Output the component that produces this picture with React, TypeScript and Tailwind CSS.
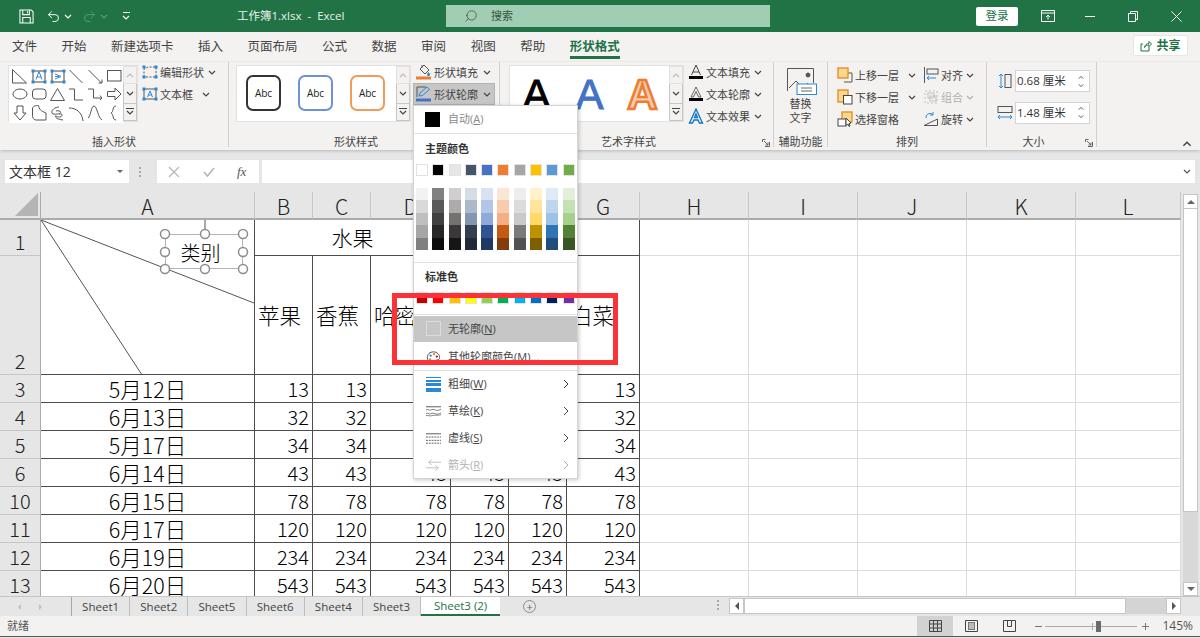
import { Search, Undo2, Redo2 } from "lucide-react";

const tabs = ["文件", "开始", "新建选项卡", "插入", "页面布局", "公式", "数据", "审阅", "视图", "帮助"];

const themeColors = [
  "bg-[#ffffff]", "bg-[#000000]", "bg-[#e7e6e6]", "bg-[#44546a]", "bg-[#4472c4]",
  "bg-[#ed7d31]", "bg-[#a5a5a5]", "bg-[#ffc000]", "bg-[#5b9bd5]", "bg-[#70ad47]",
];

const shadeColors = [
  ["bg-[#f2f2f2]", "bg-[#d9d9d9]", "bg-[#bfbfbf]", "bg-[#a6a6a6]", "bg-[#808080]"],
  ["bg-[#808080]", "bg-[#595959]", "bg-[#404040]", "bg-[#262626]", "bg-[#0d0d0d]"],
  ["bg-[#d0cece]", "bg-[#aeaaaa]", "bg-[#767171]", "bg-[#3a3838]", "bg-[#171616]"],
  ["bg-[#d6dce4]", "bg-[#adb9ca]", "bg-[#8497b0]", "bg-[#333f4f]", "bg-[#222a35]"],
  ["bg-[#d9e2f3]", "bg-[#b4c6e7]", "bg-[#8eaadb]", "bg-[#2f5496]", "bg-[#1f3864]"],
  ["bg-[#fbe5d5]", "bg-[#f7cbac]", "bg-[#f4b083]", "bg-[#c55a11]", "bg-[#833c0b]"],
  ["bg-[#ededed]", "bg-[#dbdbdb]", "bg-[#c9c9c9]", "bg-[#7b7b7b]", "bg-[#525252]"],
  ["bg-[#fff2cc]", "bg-[#fee599]", "bg-[#ffd965]", "bg-[#bf9000]", "bg-[#7f6000]"],
  ["bg-[#deeaf6]", "bg-[#bdd6ee]", "bg-[#9cc3e5]", "bg-[#2e75b5]", "bg-[#1e4e79]"],
  ["bg-[#e2efd9]", "bg-[#c5e0b3]", "bg-[#a8d08d]", "bg-[#538135]", "bg-[#375623]"],
];

const standardColors = [
  "bg-[#c00000]", "bg-[#ff0000]", "bg-[#ffc000]", "bg-[#ffff00]", "bg-[#92d050]",
  "bg-[#00b050]", "bg-[#00b0f0]", "bg-[#0070c0]", "bg-[#002060]", "bg-[#7030a0]",
];

const dataRows = [
  { row: "3", date: "5月12日", value: 13 },
  { row: "4", date: "6月13日", value: 32 },
  { row: "5", date: "5月17日", value: 34 },
  { row: "6", date: "6月14日", value: 43 },
  { row: "10", date: "6月15日", value: 78 },
  { row: "11", date: "6月17日", value: 120 },
  { row: "12", date: "6月19日", value: 234 },
  { row: "13", date: "6月20日", value: 543 },
];

const sheets = ["Sheet1", "Sheet2", "Sheet5", "Sheet6", "Sheet4", "Sheet3"];

const Chev = ({ up, className = "" }: { up?: boolean; className?: string }) => (
  <svg viewBox="0 0 8 5" className={`h-[5px] w-2 ${className}`} fill="none" stroke="currentColor" strokeWidth="1.2">
    <path d={up ? "M1 4l3-3 3 3" : "M1 1l3 3 3-3"} />
  </svg>
);

const Icon = ({ children, w = 16 }: { children: React.ReactNode; w?: number }) => (
  <svg viewBox={`0 0 ${w} 16`} width={w} height="16" fill="none" stroke="#555" strokeWidth="1" className="shrink-0">
    {children}
  </svg>
);

const Handles = () => (
  <>
    <rect x="0.500" y="1.500" width="3" height="3" fill="#2b88d8" stroke="none" />
    <rect x="12.500" y="1.500" width="3" height="3" fill="#2b88d8" stroke="none" />
    <rect x="0.500" y="11.500" width="3" height="3" fill="#2b88d8" stroke="none" />
    <rect x="12.500" y="11.500" width="3" height="3" fill="#2b88d8" stroke="none" />
  </>
);

const RibbonItem = ({
  icon,
  label,
  gap = 4,
  disabled,
}: {
  icon: React.ReactNode;
  label: string;
  gap?: number;
  disabled?: boolean;
}) => (
  <div className={`flex h-[22px] items-center ${disabled ? "text-[#b1b1b1]" : "text-[#444]"}`}>
    {icon}
    <span className="ml-[2px] whitespace-nowrap text-[11px] leading-none">{label}</span>
    <span style={{ marginLeft: gap }}>
      <Chev />
    </span>
  </div>
);

const GalleryScroll = () => (
  <div className="flex w-[14px] flex-col text-[#444]">
    <div className="flex h-[19px] items-center justify-center border border-[#e1e1e1] text-[#bdbdbd]">
      <Chev up />
    </div>
    <div className="flex h-[19px] items-center justify-center border-x border-[#c6c6c6]">
      <Chev />
    </div>
    <div className="flex h-[19px] flex-col items-center justify-center gap-[1px] border border-[#c6c6c6]">
      <div className="h-px w-2 bg-[#444]" />
      <Chev />
    </div>
  </div>
);

const Group = ({
  width,
  label,
  labelClass = "",
  launcher,
  children,
}: {
  width: string;
  label: string;
  labelClass?: string;
  launcher?: boolean;
  children: React.ReactNode;
}) => (
  <div className={`relative flex h-[85px] shrink-0 flex-col border-r border-[#d2d0ce] ${width}`}>
    <div className="flex flex-1">{children}</div>
    <div className={`h-[10px] whitespace-nowrap text-center text-[11px] leading-[10px] text-[#444] ${labelClass}`}>{label}</div>
    {launcher && (
      <svg viewBox="0 0 8 8" className="absolute bottom-0 right-[3px] h-2 w-2" fill="none" stroke="#666" strokeWidth="1">
        <path d="M7.5 3v4.5H3M.5 3V.5h3M2 2l4 4M6 3.5V6H3.5" />
      </svg>
    )}
  </div>
);

const ShapeGallery = () => (
  <svg viewBox="0 0 114 57" className="h-[57px] w-[114px] bg-white" fill="none" stroke="#555" strokeWidth="1">
    <path d="M3.5 3.5V17h14z" />
    <rect x="24" y="5" width="12" height="11" stroke="#444" />
    <path d="M27 13.500l3-8 3 8M28 11h4" stroke="#2b88d8" />
    <path d="M22.500 3.500h3v3h-3zM34.500 3.500h3v3h-3zM22.500 14.500h3v3h-3zM34.500 14.500h3v3h-3z" fill="#2b88d8" stroke="none" />
    <rect x="43" y="5" width="12" height="11" stroke="#444" />
    <path d="M46 8l6 2.500-6 2.500M46 10.500h4" stroke="#2b88d8" />
    <path d="M41.500 3.500h3v3h-3zM53.500 3.500h3v3h-3zM41.500 14.500h3v3h-3zM53.500 14.500h3v3h-3z" fill="#2b88d8" stroke="none" />
    <path d="M60.5 4l13 13M79.5 4l13 13" />
    <path d="M93 13.5V17h-3.5" />
    <rect x="98.5" y="4.5" width="13.5" height="10.5" />
    <ellipse cx="11" cy="28" rx="7" ry="5" />
    <rect x="23.5" y="23" width="13.5" height="10" rx="3" />
    <path d="M41.5 34.5l7-12 7 12z" />
    <path d="M60 23h5.5v11H74M79 23h5.5v9H92" />
    <path d="M91 29.5l2 2.5-2 2" />
    <path d="M98.5 25.5h7.5V22l6 6-6 6v-3.5h-7.5z" />
    <path d="M8 40v7H5l6 7 6-7h-3v-7z" />
    <path d="M23.5 43c0-3 3-3.5 6-3.5 1 6 5 6 7.5 7.5v7h-10c-3 0-3.5-3-3.5-5z" />
    <path d="M50 41c-4 0-8 3-7 6s10-1 10 2-5 2-6 1-2 3 7 4M47 45c3-1 7 1 3 3" />
    <path d="M60 42c7 0 13 4 14 13M79 52c3-2 3-12 6-12s4 12 8 14" />
    <path d="M107 40c-4 0-2 6-5 7 3 1 1 7 5 7" />
  </svg>
);

const Swatch = ({ color }: { color: string }) => <div className={`h-3 w-3 border border-[#e2e2e2] ${color}`} />;

const MenuRow = ({
  icon,
  label,
  hotkey,
  suffix = "",
  disabled,
  arrow,
  active,
  className = "h-[27px]",
}: {
  icon: React.ReactNode;
  label: string;
  hotkey: string;
  suffix?: string;
  disabled?: boolean;
  arrow?: boolean;
  active?: boolean;
  className?: string;
}) => (
  <div
    className={`flex shrink-0 items-center pl-[11px] pr-2 text-[11px] ${className} ${active ? "bg-[#c6c6c6]" : ""} ${
      disabled ? "text-[#b1b1b1]" : "text-[#444]"
    }`}
  >
    <div className="flex w-[16px] shrink-0 justify-center">{icon}</div>
    <span className="ml-[7px] whitespace-nowrap">
      {label}(<span className="underline">{hotkey}</span>){suffix}
    </span>
    {arrow && (
      <svg viewBox="0 0 6 10" className="ml-auto h-[10px] w-[6px]" fill="none" stroke="currentColor">
        <path d="M1 1l4 4-4 4" />
      </svg>
    )}
  </div>
);

const OutlineMenu = () => (
  <div className="absolute left-[413px] top-[105px] z-20 flex h-[374px] w-[165px] flex-col border border-[#d4d4d4] bg-white shadow-[1px_1px_4px_rgba(0,0,0,0.22)]">
    <div className="flex h-[28px] shrink-0 items-center border-b border-[#e1e1e1] pl-[11px]">
      <div className="h-[15px] w-[15px] bg-black" />
      <span className="ml-2 text-[11px] text-[#8a8a8a]">
        自动(<span className="underline">A</span>)
      </span>
    </div>
    <div className="flex h-[30px] shrink-0 items-center pl-[11px] text-[11px] font-bold text-[#333]">主题颜色</div>
    <div className="flex gap-[4.3px] pl-[2px]">
      {themeColors.map((c) => (
        <Swatch key={c} color={c} />
      ))}
    </div>
    <div className="mt-3 flex gap-[4.3px] pl-[2px]">
      {shadeColors.map((col, i) => (
        <div key={i} className="flex flex-col">
          {col.map((c) => (
            <div key={c} className={`h-[12.4px] w-3 ${c}`} />
          ))}
        </div>
      ))}
    </div>
    <div className="mt-3 h-px shrink-0 bg-[#e1e1e1]" />
    <div className="flex h-[29px] shrink-0 items-center pl-[11px] text-[11px] font-bold text-[#333]">标准色</div>
    <div className="flex gap-[4.3px] pl-[2px]">
      {standardColors.map((c) => (
        <Swatch key={c} color={c} />
      ))}
    </div>
    <div className="mt-[10px] h-px shrink-0 bg-[#e1e1e1]" />
    <MenuRow
      active
      className="mt-px h-[26px]"
      label="无轮廓"
      hotkey="N"
      icon={<div className="h-[15px] w-[15px] border border-[#dcdcdc]" />}
    />
    <MenuRow
      className="mt-[3px] h-[25px]"
      label="其他轮廓颜色"
      hotkey="M"
      suffix="..."
      icon={
        <svg viewBox="0 0 16 16" className="h-[15px] w-[15px]" fill="none" stroke="#444">
          <path d="M8 2C4 2 1.500 4.500 1.500 8c0 3.500 3 6 6 6 2 0 1.500-2 2.500-3 1-.8 4.500.5 4.500-3 0-3.500-3-6-6.500-6z" />
          <circle cx="5" cy="6" r="1.200" fill="#2b88d8" stroke="none" />
          <circle cx="8.500" cy="4.500" r="1.200" fill="#ed7d31" stroke="none" />
          <circle cx="4.500" cy="10" r="1.200" fill="#70ad47" stroke="none" />
          <circle cx="11.500" cy="7" r="1.200" fill="#c00000" stroke="none" />
        </svg>
      }
    />
    <div className="h-px shrink-0 bg-[#e1e1e1]" />
    <MenuRow
      arrow
      label="粗细"
      hotkey="W"
      icon={
        <div className="flex h-[15px] w-[15px] flex-col justify-between">
          <div className="h-px bg-[#2b88d8]" />
          <div className="h-[2px] bg-[#2b88d8]" />
          <div className="h-[3px] bg-[#2b88d8]" />
          <div className="h-[4px] bg-[#2b88d8]" />
        </div>
      }
    />
    <MenuRow
      arrow
      label="草绘"
      hotkey="K"
      icon={
        <svg viewBox="0 0 16 12" className="h-3 w-[15px]" fill="none" stroke="#555">
          <path d="M0 1.500h16" />
          <path d="M0 5c2-2 3 1 5 0s3-1 5 0 4 0 6-1M0 9c2-2 3 1 5 0s3-1 5 0 4 0 6-1M0 11c2-1 4 1 6 0s6 0 10-1" strokeWidth=".8" />
        </svg>
      }
    />
    <MenuRow
      arrow
      label="虚线"
      hotkey="S"
      icon={
        <svg viewBox="0 0 16 12" className="h-3 w-[15px]" fill="none" stroke="#555">
          <path d="M0 1.500h16" />
          <path d="M0 5h16M0 8.500h16M0 11.500h16" strokeDasharray="2 1" />
        </svg>
      }
    />
    <MenuRow
      arrow
      disabled
      label="箭头"
      hotkey="R"
      icon={
        <svg viewBox="0 0 16 14" className="h-[14px] w-[15px]" fill="none" stroke="#bdbdbd">
          <path d="M3 4h13M3 4l3-3M3 4l3 3M0 10h13M13 10l-3-3M13 10l-3 3" />
        </svg>
      }
    />
  </div>
);

const gridLine = "border-r border-b border-[#4d4d4d]";
const lightCell = "border-r border-b border-[#dcdcdc]";
const headCell = "flex items-center justify-center border-r border-b-2 border-r-[#c6c6c6] border-b-[#ababab] bg-[#e6e6e6] pt-[2px] text-[21px] text-[#222]";
const rowHead = "flex justify-center border-r border-b border-r-[#ababab] border-b-[#c6c6c6] bg-[#e6e6e6] text-[#222]";

const LightCells = () => (
  <>
    {[0, 1, 2, 3, 4].map((i) => (
      <div key={i} className={lightCell} />
    ))}
  </>
);

const Sheet = () => (
  <div className="relative grid w-[1181px] shrink-0 grid-cols-[41px_214px_58px_58px_80px_58px_58px_73px_109px_109px_109px_109px_105px] grid-rows-[28px_36px_119px] auto-rows-[28px] overflow-hidden bg-white font-['Noto_Sans_CJK_SC',sans-serif] text-[20px] font-light leading-none text-black">
    <div className="relative border-r border-b-2 border-r-[#ababab] border-b-[#ababab] bg-[#e6e6e6]">
      <div className="absolute bottom-[2px] right-[2px] h-0 w-0 border-b-[23px] border-l-[23px] border-b-[#b4b4b4] border-l-transparent" />
    </div>
    {["A", "B", "C", "D", "E", "F", "G", "H", "I", "J", "K", "L"].map((c) => (
      <div key={c} className={headCell}>
        {c}
      </div>
    ))}

    <div className={`${rowHead} items-end pb-[3px]`}>1</div>
    <div className={`row-span-2 ${gridLine}`} />
    <div className={`col-span-3 flex items-center justify-center text-[21px] ${gridLine}`}>水果</div>
    <div className={`col-span-3 ${gridLine}`} />
    <LightCells />

    <div className={`${rowHead} items-end pb-[3px]`}>2</div>
    <div className={`flex items-center whitespace-nowrap pl-[3px] text-[21.500px] ${gridLine}`}>苹果</div>
    <div className={`flex items-center whitespace-nowrap pl-[3px] text-[21.500px] ${gridLine}`}>香蕉</div>
    <div className={`flex items-center whitespace-nowrap pl-[3px] text-[21.500px] ${gridLine}`}>哈密瓜</div>
    <div className={gridLine} />
    <div className={gridLine} />
    <div className={`flex items-center whitespace-nowrap pl-[4px] text-[21.500px] ${gridLine}`}>白菜</div>
    <LightCells />

    {dataRows.map((r) => (
      <div key={r.row} className="contents">
        <div className={`${rowHead} items-center`}>{r.row}</div>
        <div className={`flex items-center justify-center text-[21.500px] ${gridLine}`}>{r.date}</div>
        {[0, 1, 2, 3, 4, 5].map((i) => (
          <div key={i} className={`flex items-center justify-end pr-[3px] ${gridLine}`}>
            {r.value}
          </div>
        ))}
        <LightCells />
      </div>
    ))}

    {/* diagonal header lines and the selected text box sit on top of cell A1 */}
    <svg className="absolute left-[40px] top-[28px] h-[155px] w-[214px]" viewBox="0 0 214 155" fill="none" stroke="#555">
      <path d="M1 0l213 83M1 0l101 155" />
    </svg>
    <div className="absolute left-[165px] top-[42px] flex h-[35px] w-[78px] items-center justify-center border border-[#b4b4b4] bg-white pr-[7px] pt-[2px]">
      类别
    </div>
    <svg className="absolute left-[158px] top-[28px] h-[56px] w-[92px]" viewBox="0 0 92 56" fill="#fff" stroke="#8c8c8c" strokeWidth="1.500">
      <path d="M47 0v9" />
      {[7, 47, 85].map((x) =>
        [14, 32, 49].map((y) => (x === 47 && y === 32 ? null : <circle key={`${x}-${y}`} cx={x} cy={y} r="4.500" />))
      )}
    </svg>
  </div>
);

const ScrollBar = () => (
  <div className="flex flex-1 flex-col bg-[#e6e6e6] pl-[2px] pr-[2px] pt-[2px]">
    <div className="flex h-[15px] shrink-0 items-center justify-center border border-[#c6c6c6] bg-white">
      <div className="h-0 w-0 border-x-[4px] border-b-[4px] border-x-transparent border-b-[#666]" />
    </div>
    <div className="h-[303px] shrink-0 border-x border-b border-[#c6c6c6] bg-white" />
    <div className="flex-1 bg-[#d8d8d8]" />
    <div className="flex h-[14px] shrink-0 items-center justify-center border border-[#c6c6c6] bg-white">
      <div className="h-0 w-0 border-x-[4px] border-t-[4px] border-x-transparent border-t-[#666]" />
    </div>
  </div>
);

export default function App() {
  return (
    <div className="relative flex h-[638px] w-[1200px] flex-col overflow-hidden bg-[#e6e6e6] font-['Open_Sans','Noto_Sans_CJK_SC',sans-serif]">
      {/* title bar */}
      <div className="flex h-[32px] shrink-0 items-center bg-[#217346] text-white">
        <svg viewBox="0 0 16 16" className="ml-[19px] h-[15px] w-[15px]" fill="none" stroke="#fff" strokeWidth="1.100">
          <path d="M1 1h12l2 2v12H1zM4 1v5h7V1M4 15V9h8v6M9 2.500v2" />
        </svg>
        <Undo2 className="ml-[12px] h-[15px] w-[15px]" strokeWidth={1.5} />
        <Chev className="ml-[3px]" />
        <Redo2 className="ml-[10px] h-[15px] w-[15px] text-[#5b9a7a]" strokeWidth={1.5} />
        <Chev className="ml-[3px] text-[#5b9a7a]" />
        <div className="ml-[14px] flex flex-col items-center gap-[2px]">
          <div className="h-px w-[7px] bg-white" />
          <Chev />
        </div>
        <div className="ml-[107px] w-[108px] whitespace-nowrap text-[11.500px] text-[#e9f2ed]">工作簿1.xlsx&nbsp; -&nbsp; Excel</div>
        <div className="ml-[101px] flex h-[22px] w-[324px] items-center bg-[#a0cdb3] text-[#31563f]">
          <Search className="ml-[18px] h-[14px] w-[14px] -scale-x-100" strokeWidth={1.3} />
          <span className="ml-[13px] text-[11px]">搜索</span>
        </div>
        <div className="ml-[206px] flex h-[19px] w-[42px] items-center justify-center rounded-[2px] bg-white text-[11.500px] text-[#217346]">登录</div>
        <svg viewBox="0 0 14 12" className="ml-[23px] h-3 w-[14px]" fill="none" stroke="#fff">
          <path d="M.5.5h13v11H.5zM.5 3h13" />
          <path d="M7 9.500V5M5 7l2-2 2 2" />
        </svg>
        <div className="ml-[30px] h-px w-[10px] bg-white" />
        <svg viewBox="0 0 10 11" className="ml-[33px] h-[11px] w-[10px]" fill="none" stroke="#fff">
          <path d="M.5 2.500h7v8h-7zM2.500 2.500V.5h7v8h-2" />
        </svg>
        <svg viewBox="0 0 11 11" className="ml-[33px] h-[11px] w-[11px]" fill="none" stroke="#fff">
          <path d="M.5.5l10 10M10.500.5l-10 10" />
        </svg>
      </div>

      {/* ribbon tabs */}
      <div className="flex h-[30px] shrink-0 items-start bg-[#f3f2f1] pl-3 pt-[6px] text-[12.500px] leading-[18px] text-[#444]">
        <div className="flex gap-[24.500px]">
          {tabs.map((t) => (
            <span key={t} className="whitespace-nowrap">
              {t}
            </span>
          ))}
          <span className="h-[21px] whitespace-nowrap border-b-[3px] border-[#217346] font-bold text-[#217346]">形状格式</span>
        </div>
        <div className="ml-auto mr-3 mt-[-3px] flex h-[21px] w-[55px] items-center justify-center gap-1 rounded-[2px] border border-[#e6e6e6] bg-white text-[12px] font-bold text-[#217346]">
          <svg viewBox="0 0 12 12" className="h-3 w-3" fill="none" stroke="#217346">
            <path d="M9 6.500V11H1V4h2M4.500 7.500C5 4.500 7 3.500 9 3.500V1.500L11.500 4 9 6.500v-1.500c-2 0-3.500.5-4.500 2.500z" />
          </svg>
          共享
        </div>
      </div>

      {/* ribbon */}
      <div className="z-10 flex h-[88px] shrink-0 bg-[#f3f2f1] shadow-[0_1px_3px_rgba(0,0,0,0.2)]">
        <Group width="w-[229px]" label="插入形状">
          <div className="ml-2 mt-[3px] flex h-[57px] border border-[#e1e1e1]">
            <ShapeGallery />
            <GalleryScroll />
          </div>
          <div className="ml-[4px] -mt-px flex flex-col">
            <RibbonItem
              gap={4}
              label="编辑形状"
              icon={
                <Icon>
                  <path d="M2 13V5L6 3h8v10z" stroke="#555" strokeDasharray="2 1.500" />
                  <Handles />
                </Icon>
              }
            />
            <RibbonItem
              gap={9}
              label="文本框"
              icon={
                <Icon>
                  <rect x="2" y="3" width="12" height="10" />
                  <path d="M5.500 11l2.500-6 2.500 6M6.500 9h3" stroke="#2b88d8" />
                  <Handles />
                </Icon>
              }
            />
          </div>
        </Group>

        <Group width="w-[271px]" label="形状样式" labelClass="pr-4">
          <div className="ml-[7px] mt-[3px] flex h-[57px] border border-[#e1e1e1]">
            <div className="flex w-[159px] items-start gap-[17px] bg-white pl-[9px] pt-[9px]">
              <div className="flex h-[36px] w-[35px] items-center justify-center rounded-[7px] border-2 border-[#333] text-[10px] text-[#222]">Abc</div>
              <div className="flex h-[36px] w-[35px] items-center justify-center rounded-[7px] border-2 border-[#6d93d6] text-[10px] text-[#222]">Abc</div>
              <div className="flex h-[36px] w-[35px] items-center justify-center rounded-[7px] border-2 border-[#f19a5c] text-[10px] text-[#222]">Abc</div>
            </div>
            <GalleryScroll />
          </div>
          <div className="ml-[2px] -mt-px flex flex-col">
            <div className="pl-[3px]">
              <RibbonItem
                gap={5}
                label="形状填充"
                icon={
                  <Icon>
                    <path d="M8 1l5 5-4 4-5-5zM6 1v3" />
                    <path d="M12.500 8s1.500 1.500 1.500 2.500a1.500 1.500 0 01-3 0C11 9.500 12.500 8 12.500 8z" fill="#2b88d8" stroke="none" />
                    <rect x="0" y="12.500" width="15" height="3" fill="#ed7d31" stroke="none" />
                  </Icon>
                }
              />
            </div>
            <div className="border border-[#b3b3b3] bg-[#c6c6c6] pl-[2px] pr-[3px] [&>div]:h-[20px]">
              <RibbonItem
                gap={5}
                label="形状轮廓"
                icon={
                  <Icon>
                    <path d="M1 1h9M1 1v10" />
                    <path d="M3 10l1-3 7-6 2.500 2.500-7 6z" stroke="#2b88d8" />
                    <rect x="0" y="12.500" width="15" height="3" fill="#4472c4" stroke="none" />
                  </Icon>
                }
              />
            </div>
          </div>
        </Group>

        <Group width="w-[274px]" label="艺术字样式" labelClass="pr-4" launcher>
          <div className="ml-[9px] mt-[3px] flex h-[57px] border border-[#e1e1e1]">
            <div className="grid w-[159px] grid-cols-3 items-center bg-white pt-[3px] text-center font-['Liberation_Sans',sans-serif] text-[42px] leading-none">
              <span className="text-black [-webkit-text-stroke:1px_#000]">A</span>
              <span className="text-[#4472c4] [-webkit-text-stroke:1px_#4472c4]">A</span>
              <span className="font-bold text-[#f8cbad] [-webkit-text-stroke:2.500px_#ed7d31]">A</span>
            </div>
            <GalleryScroll />
          </div>
          <div className="ml-[4px] -mt-px flex flex-col">
            <RibbonItem
              gap={4}
              label="文本填充"
              icon={
                <Icon>
                  <path d="M3.500 11L8 1l4.500 10M5 8h6" stroke="#444" />
                  <rect x="1" y="12" width="14" height="3" fill="#000" stroke="none" />
                </Icon>
              }
            />
            <RibbonItem
              gap={4}
              label="文本轮廓"
              icon={
                <Icon>
                  <path d="M3 11L8 1l5 10h-2.500L8 5.500 5.500 11z" stroke="#444" strokeWidth=".8" />
                  <rect x="1" y="12" width="14" height="3" fill="#000" stroke="none" />
                </Icon>
              }
            />
            <RibbonItem
              gap={4}
              label="文本效果"
              icon={
                <Icon>
                  <path d="M1.500 15L8 1l6.500 14h-3L10 12H6l-1.500 3zM6.500 9.500L8 6l1.500 3.500z" stroke="#0b73c9" strokeWidth="1.300" />
                </Icon>
              }
            />
          </div>
        </Group>

        <Group width="w-[54px]" label="辅助功能">
          <div className="flex w-full flex-col items-center pt-[6px] text-[11px] leading-[14px] text-[#444]">
            <svg viewBox="0 0 30 27" className="ml-[3px] h-[27px] w-[30px]" fill="none" stroke="#555">
              <path d="M.5 23V.5h26V15" />
              <path d="M2 20l7-7 7 7 5-5" />
              <circle cx="21" cy="7" r="2" fill="#555" />
              <rect x="10" y="16" width="19.500" height="10.500" fill="#fff" stroke="#2b88d8" />
              <path d="M14 20h11M14 23h11" stroke="#666" />
            </svg>
            <span className="mt-[2px]">替换</span>
            <span>文字</span>
          </div>
        </Group>

        <Group width="w-[159px]" label="排列">
          <div className="ml-[9px] mt-[2px] flex flex-col">
            <RibbonItem
              gap={9}
              label="上移一层"
              icon={
                <Icon>
                  <path d="M7 6h8v9H7" />
                  <rect x="1" y="1" width="10" height="10" fill="#fbd68f" stroke="#e08a1e" strokeWidth="1.300" />
                </Icon>
              }
            />
            <RibbonItem
              gap={9}
              label="下移一层"
              icon={
                <Icon>
                  <rect x="1" y="1" width="10" height="12" fill="#fbd68f" stroke="#e08a1e" strokeWidth="1.300" />
                  <rect x="6.500" y="6.500" width="8.500" height="8.500" fill="#fff" stroke="#444" />
                </Icon>
              }
            />
            <div className="flex h-[22px] items-center text-[#444]">
              <Icon>
                <rect x="5" y="1" width="10" height="10" fill="#fbd68f" stroke="#e08a1e" strokeWidth="1.300" />
                <rect x="1" y="8" width="8" height="7" fill="#fff" stroke="#444" />
                <path d="M9 7l5 5-2 .5 1 2.500-1 .5-1-2.500-2 1.500z" fill="#fff" stroke="#444" />
              </Icon>
              <span className="ml-[2px] whitespace-nowrap text-[11px] leading-none">选择窗格</span>
            </div>
          </div>
          <div className="ml-[7px] mt-[2px] flex flex-col">
            <RibbonItem
              gap={3}
              label="对齐"
              icon={
                <Icon>
                  <path d="M1.500 0v16" />
                  <rect x="4" y="2" width="11" height="5" />
                  <path d="M4 11h9M4 11l2-2M4 11l2 2" stroke="#2b88d8" />
                </Icon>
              }
            />
            <RibbonItem
              disabled
              gap={3}
              label="组合"
              icon={
                <Icon>
                  <path d="M2 2h12v12H2z" stroke="#c0c0c0" strokeDasharray="2 2" />
                  <rect x="5" y="4" width="6" height="5" stroke="#c0c0c0" />
                  <rect x="7" y="7" width="6" height="5" stroke="#c0c0c0" />
                </Icon>
              }
            />
            <RibbonItem
              gap={3}
              label="旋转"
              icon={
                <Icon>
                  <path d="M1 14.500L14.500 8v6.500z" />
                  <path d="M3 7a4 4 0 016-4l1 1M10 1v3H7" stroke="#2b88d8" />
                </Icon>
              }
            />
          </div>
        </Group>

        <Group width="w-[110px]" label="大小" labelClass="pr-4" launcher>
          <div className="ml-[10px] mt-[8px] flex flex-col gap-[9.500px]">
            {[
              { value: "0.68 厘米", tall: true },
              { value: "1.48 厘米", tall: false },
            ].map((s) => (
              <div key={s.value} className="flex items-center">
                <Icon>
                  {s.tall ? (
                    <>
                      <rect x="8" y="1.500" width="6" height="13" />
                      <path d="M4 1v14M2 3l2-2 2 2M2 13l2 2 2-2" stroke="#2b88d8" />
                    </>
                  ) : (
                    <>
                      <rect x="1" y="1.500" width="14" height="6" />
                      <path d="M1 12h14M3 10l-2 2 2 2M13 10l2 2-2 2" stroke="#2b88d8" />
                    </>
                  )}
                </Icon>
                <div className="ml-[2px] flex h-[22px] w-[75px] items-center border border-[#d4d4d4] bg-white pl-[1px] text-[11.500px] text-[#333]">
                  {s.value}
                  <div className="ml-auto mr-[5px] flex flex-col gap-[3px] text-[#444]">
                    <Chev up className="h-1 w-[6px]" />
                    <Chev className="h-1 w-[6px]" />
                  </div>
                </div>
              </div>
            ))}
          </div>
        </Group>

        <div className="mb-[3px] ml-auto mr-2 self-end text-[#444]">
          <Chev up className="h-[6px] w-[10px]" />
        </div>
      </div>

      {/* formula bar */}
      <div className="flex h-[42px] shrink-0 items-start pl-[5px] pt-[10px]">
        <div className="flex h-[23px] w-[124px] items-center justify-between bg-white pl-[4px] pr-[6px] text-[14px] text-[#333]">
          文本框 12
          <div className="h-0 w-0 border-x-[3px] border-t-[3px] border-x-transparent border-t-[#666]" />
        </div>
        <div className="mx-[10px] mt-[7px] flex flex-col gap-[2px]">
          <div className="h-[2px] w-[2px] bg-[#aaa]" />
          <div className="h-[2px] w-[2px] bg-[#aaa]" />
          <div className="h-[2px] w-[2px] bg-[#aaa]" />
        </div>
        <div className="ml-[6px] flex h-[23px] w-[102px] items-center bg-white pl-[11px]">
          <svg viewBox="0 0 12 12" className="h-3 w-3" fill="none" stroke="#b5b5b5" strokeWidth="1.200">
            <path d="M1 1l10 10M11 1L1 11" />
          </svg>
          <svg viewBox="0 0 12 12" className="ml-[23px] h-3 w-3" fill="none" stroke="#b5b5b5" strokeWidth="1.500">
            <path d="M1 6l3.500 4L11 2" />
          </svg>
          <span className="ml-[22px] font-['Liberation_Serif',serif] text-[13px] italic text-[#555]">fx</span>
        </div>
        <div className="ml-[3px] flex h-[23px] w-[933px] items-center justify-end bg-white pr-1 text-[#555]">
          <Chev />
        </div>
      </div>

      {/* sheet */}
      <div className="flex h-[404px] shrink-0 bg-white">
        <Sheet />
        <ScrollBar />
      </div>

      {/* sheet tabs and horizontal scroll */}
      <div className="flex h-[20px] shrink-0 items-start border-t border-[#c6c6c6] bg-[#e6e6e6] text-[11.500px] text-[#444]">
        <div className="flex h-[19px] w-[72px] items-center border-r border-[#a6a6a6] pl-[18px]">
          <div className="h-0 w-0 border-y-[3px] border-r-[3px] border-y-transparent border-r-[#c0c0c0]" />
          <div className="ml-[18px] h-0 w-0 border-y-[3px] border-l-[3px] border-y-transparent border-l-[#c0c0c0]" />
        </div>
        {sheets.map((s) => (
          <div key={s} className="flex h-[19px] w-[58.200px] items-center justify-center border-r border-[#bdbdbd]">
            {s}
          </div>
        ))}
        <div className="flex h-[19px] w-[79px] items-center justify-center border-b-2 border-[#217346] bg-white text-[#217346]">Sheet3 (2)</div>
        <div className="ml-[23px] mt-[3px] flex h-[13px] w-[13px] items-center justify-center rounded-full border border-[#8a8a8a] text-[11px] leading-none text-[#666]">+</div>
        <div className="ml-[181px] mt-[3px] flex flex-col gap-[2px]">
          <div className="h-[2px] w-[2px] bg-[#aaa]" />
          <div className="h-[2px] w-[2px] bg-[#aaa]" />
          <div className="h-[2px] w-[2px] bg-[#aaa]" />
        </div>
        <div className="ml-[10px] mt-[1px] flex h-[16px] w-[452px] bg-[#d4d4d4]">
          <div className="flex w-[15px] items-center justify-center border border-[#c6c6c6] bg-white">
            <div className="h-0 w-0 border-y-[4px] border-r-[4px] border-y-transparent border-r-[#555]" />
          </div>
          <div className="w-[382px] border border-[#c6c6c6] bg-white" />
          <div className="ml-auto flex w-[15px] items-center justify-center border border-[#c6c6c6] bg-white">
            <div className="h-0 w-0 border-y-[4px] border-l-[4px] border-y-transparent border-l-[#555]" />
          </div>
        </div>
      </div>

      {/* status bar */}
      <div className="flex h-[21px] shrink-0 items-center border-b border-[#555] bg-[#f3f2f1] pl-[7px] text-[11px] text-[#555]">
        <span>就绪</span>
        <div className="ml-auto flex h-full w-[36px] items-center justify-center bg-[#d2d2d2]">
          <svg viewBox="0 0 13 12" className="h-3 w-[13px]" fill="none" stroke="#444">
            <path d="M.5.5h12v11H.5zM.5 4h12M.5 8h12M4.500.5v11M8.500.5v11" />
          </svg>
        </div>
        <svg viewBox="0 0 13 12" className="ml-[12px] h-3 w-[13px]" fill="none" stroke="#444">
          <path d="M.5.5h12v11H.5z" />
          <rect x="3.500" y="2.500" width="6" height="7" fill="#bbb" stroke="#777" />
        </svg>
        <svg viewBox="0 0 13 12" className="ml-[25px] h-3 w-[13px]" fill="none" stroke="#444">
          <path d="M.5.500h12v11H.5zM4.500.5v6h4v-6" />
        </svg>
        <div className="ml-[19px] h-px w-[7px] bg-[#777]" />
        <div className="relative ml-[3px] h-px w-[92px] bg-[#aaa]">
          <div className="absolute left-[47px] top-[-3px] h-[7px] w-px bg-[#aaa]" />
          <div className="absolute left-[51px] top-[-5px] h-[11px] w-[5px] bg-[#6b6b6b]" />
        </div>
        <div className="relative ml-[5px] h-px w-[7px] bg-[#777]">
          <div className="absolute left-[3px] top-[-3px] h-[7px] w-px bg-[#777]" />
        </div>
        <span className="ml-[13px] mr-[7px] text-[12px]">145%</span>
      </div>

      <OutlineMenu />
      {/* annotation drawn over the screenshot */}
      <div className="absolute left-[392px] top-[293px] z-30 h-[72px] w-[226px] border-[5px] border-[#fb3339]" />
    </div>
  );
}
